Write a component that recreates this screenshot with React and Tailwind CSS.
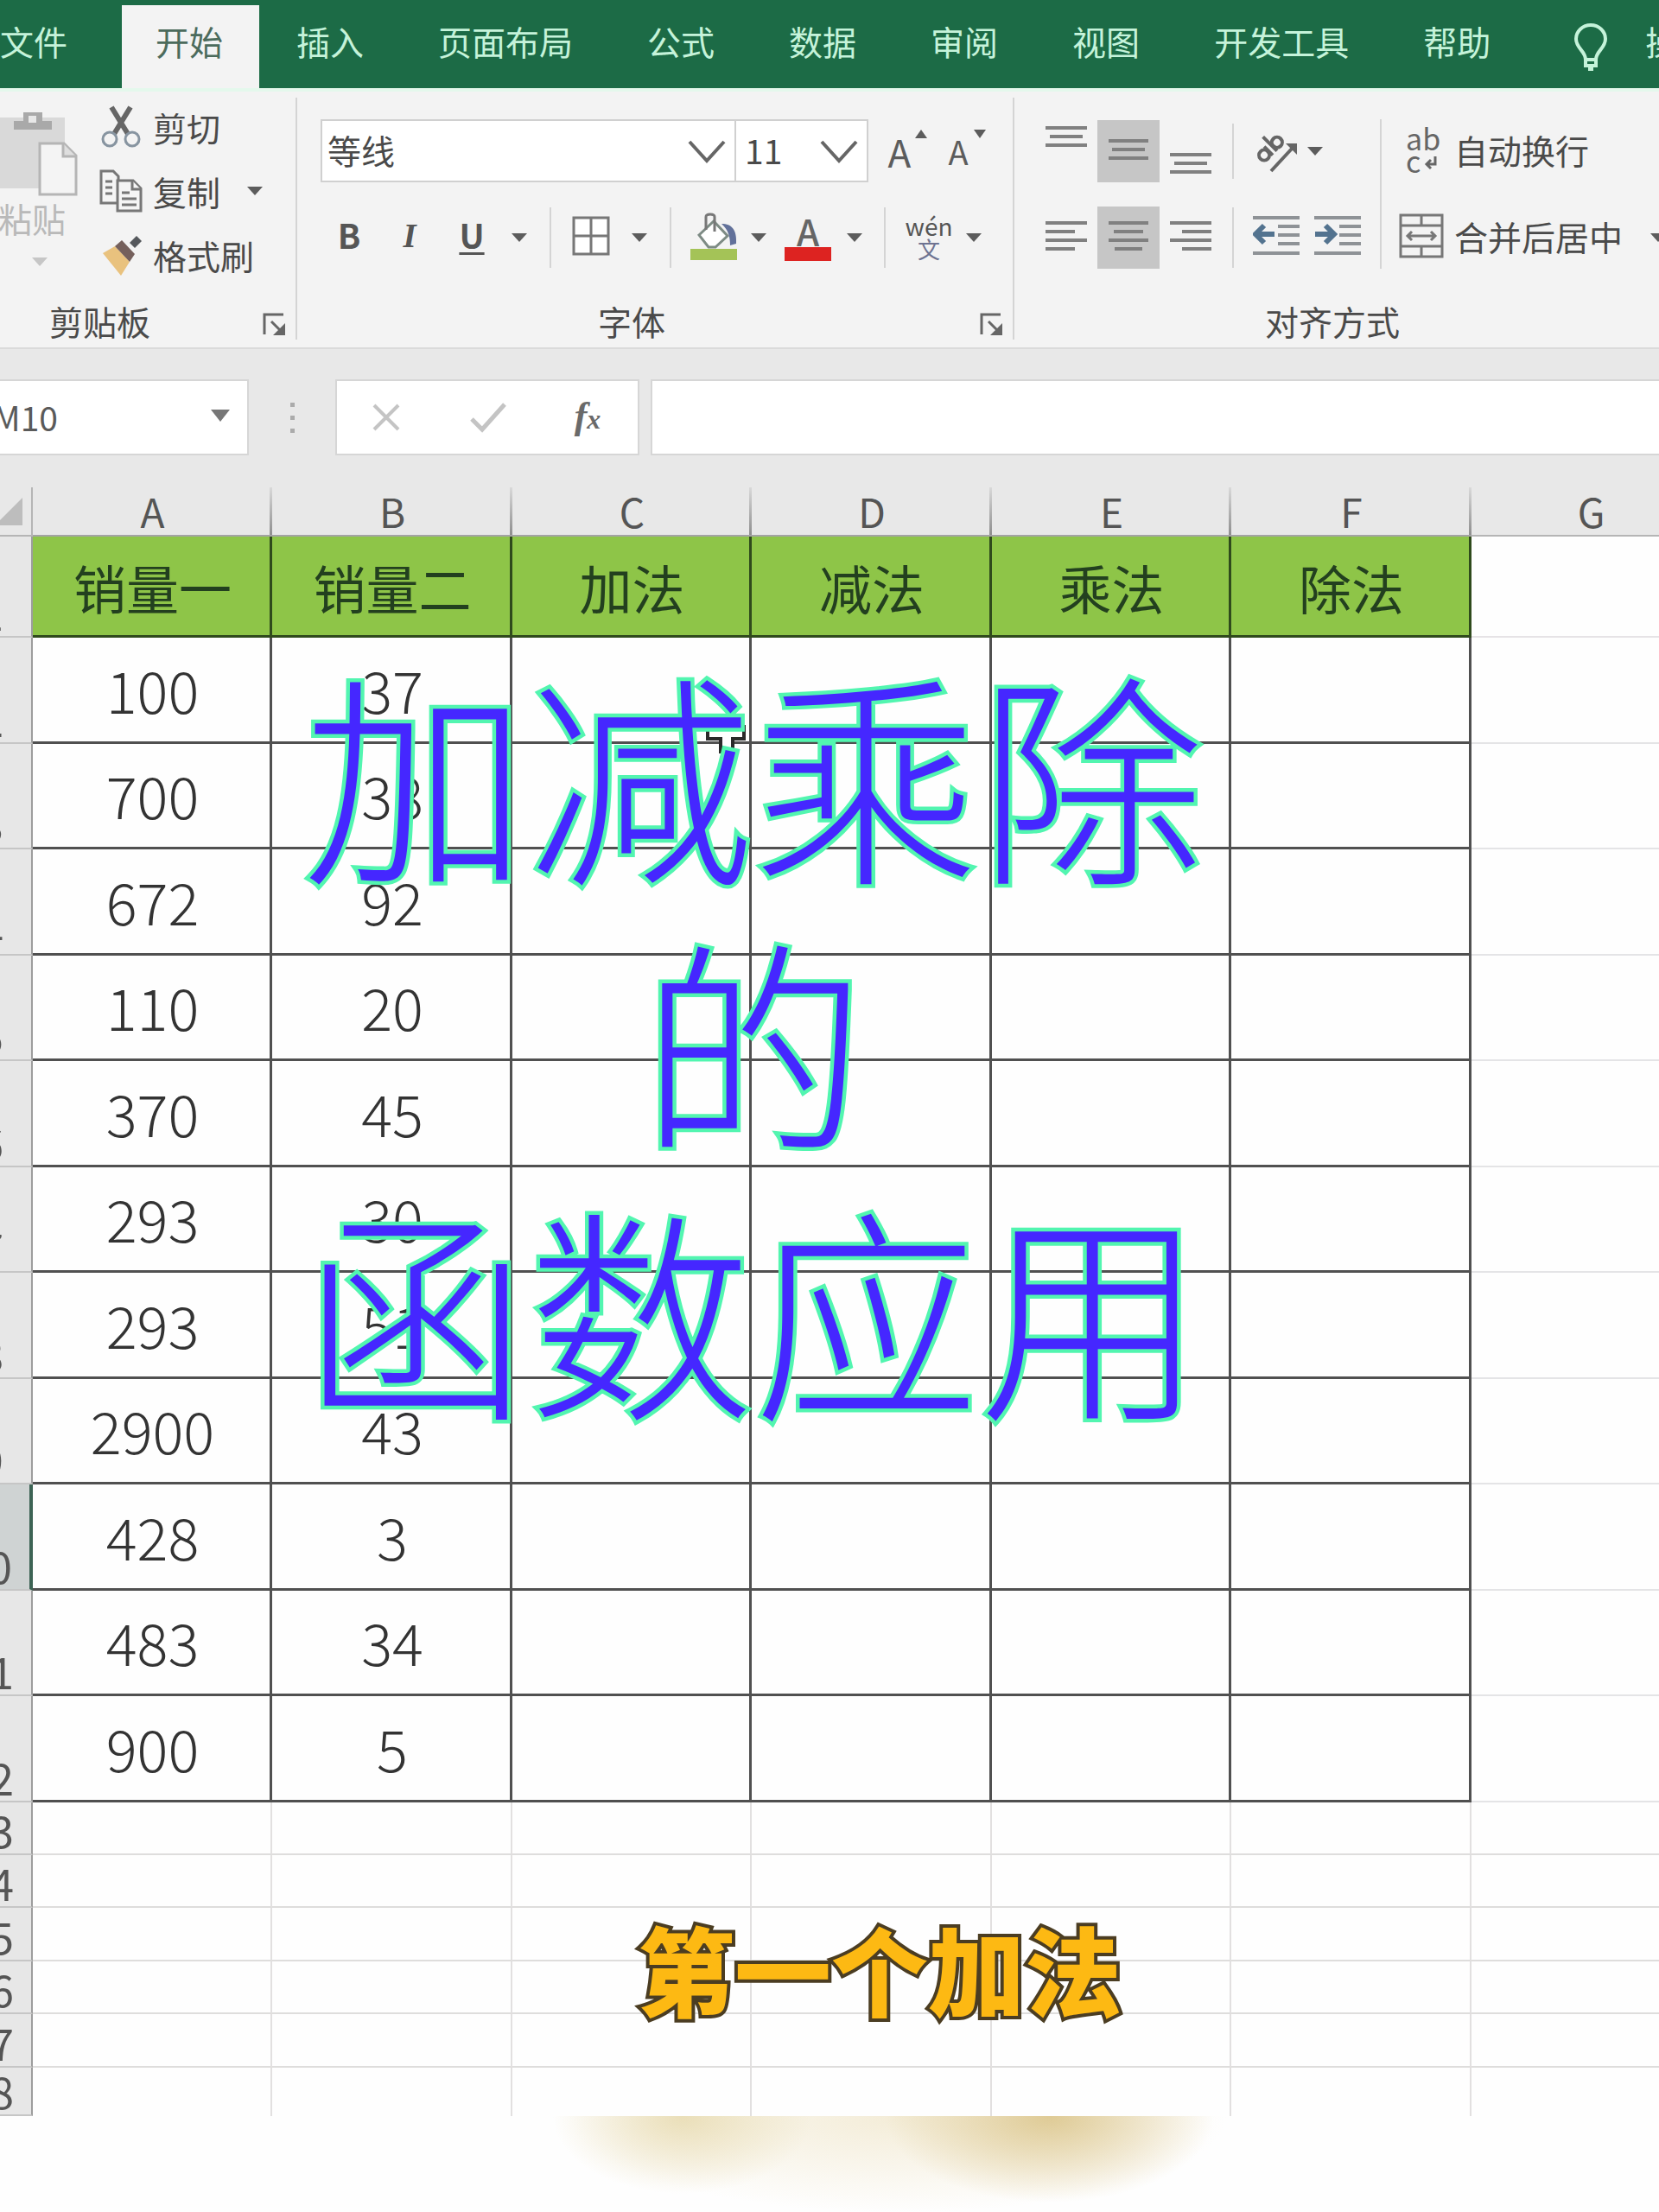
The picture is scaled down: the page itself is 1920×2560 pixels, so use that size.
import React from "react";

const tabs = ["插入", "页面布局", "公式", "数据", "审阅", "视图", "开发工具", "帮助"];

const columns = [
  { letter: "A", width: "w-[277px]", title: "销量一" },
  { letter: "B", width: "w-[278px]", title: "销量二" },
  { letter: "C", width: "w-[277px]", title: "加法" },
  { letter: "D", width: "w-[278px]", title: "减法" },
  { letter: "E", width: "w-[277px]", title: "乘法" },
  { letter: "F", width: "w-[278px]", title: "除法" },
];

const rows = [
  [100, 37],
  [700, 38],
  [672, 92],
  [110, 20],
  [370, 45],
  [293, 30],
  [293, 51],
  [2900, 43],
  [428, 3],
  [483, 34],
  [900, 5],
];

const emptyRows = [
  { n: 13, height: "h-[61px]" },
  { n: 14, height: "h-[61px]" },
  { n: 15, height: "h-[62px]" },
  { n: 16, height: "h-[61px]" },
  { n: 17, height: "h-[62px]" },
  { n: 18, height: "h-[56px]" },
];

function Caret({ className = "text-[#5c5c5c]" }) {
  return (
    <svg viewBox="0 0 18 10" className={`h-[10px] w-[18px] shrink-0 ${className}`} aria-hidden="true">
      <path d="M0 0H18L9 10Z" fill="currentColor" />
    </svg>
  );
}

function CaretButton({ label, className }) {
  return (
    <button type="button" aria-label={label} className={`flex h-full shrink-0 items-center justify-center ${className}`}>
      <Caret />
    </button>
  );
}

function Chevron() {
  return (
    <svg viewBox="0 0 44 28" className="pointer-events-none absolute right-[10px] h-7 w-11" fill="none" aria-hidden="true">
      <path d="M2 3L22 25L42 3" stroke="#666" strokeWidth="4" />
    </svg>
  );
}

function Launcher({ label }) {
  return (
    <button type="button" aria-label={label} className="absolute right-[10px] top-3">
      <svg viewBox="0 0 28 28" className="h-7 w-7" fill="none" stroke="#666" aria-hidden="true">
        <path d="M2 26V3H24" strokeWidth="3" />
        <path d="M10 11L22 23" strokeWidth="3" />
        <path d="M26 13V27H12Z" fill="#666" stroke="none" />
      </svg>
    </button>
  );
}

function Lines({ bars, offset = 0 }) {
  return (
    <svg viewBox="0 0 48 72" className="h-[72px] w-12" aria-hidden="true">
      {bars.map(([x, w], i) => (
        <rect key={i} x={x} y={offset + i * 10} width={w} height="4" fill="#808080" />
      ))}
    </svg>
  );
}

function AlignButton({ label, active, bars, offset }) {
  return (
    <button
      type="button"
      aria-label={label}
      aria-pressed={!!active}
      className={`flex h-[72px] w-[72px] shrink-0 items-center justify-center ${active ? "bg-[#c6c6c6]" : ""}`}
    >
      <Lines bars={bars} offset={offset} />
    </button>
  );
}

function Indent({ flip }) {
  return (
    <svg viewBox="0 0 54 48" className="h-12 w-[54px]" aria-hidden="true">
      <g fill="#8e9296">
        <rect x="0" y="1" width="54" height="4" />
        <rect x="29" y="11" width="25" height="4" />
        <rect x="29" y="21" width="25" height="4" />
        <rect x="29" y="31" width="25" height="4" />
        <rect x="0" y="42" width="54" height="4" />
      </g>
      <g stroke="#53738f" strokeWidth="6" fill="none" transform={flip ? "translate(26 0) scale(-1 1)" : undefined}>
        <path d="M3 22H25M13 12L3 22L13 32" />
      </g>
    </svg>
  );
}

function Divider({ className = "h-[70px]" }) {
  return <span className={`w-[2px] shrink-0 self-center bg-[#d4d4d4] ${className}`} />;
}

function TabBar() {
  return (
    <nav className="flex h-[102px] items-end overflow-hidden bg-[#1c6b46] text-[39px] leading-[44px] text-[#c5f3da]" aria-label="功能区">
      <button type="button" className="h-24 shrink-0 whitespace-nowrap pb-[14px] pr-[63px]">文件</button>
      <button type="button" className="h-24 shrink-0 whitespace-nowrap bg-[#f3f3f3] pb-[14px] pl-[39px] pr-[42px] text-[#4c6b5c]">开始</button>
      {tabs.map((t) => (
        <button key={t} type="button" className="h-24 shrink-0 whitespace-nowrap px-[43px] pb-[14px]">
          {t}
        </button>
      ))}
      <button type="button" className="flex h-24 shrink-0 items-center gap-11 whitespace-nowrap pb-[14px] pl-[54px]">
        <svg viewBox="0 0 38 56" className="mt-4 h-14 w-[38px]" fill="none" stroke="currentColor" strokeWidth="4" aria-hidden="true">
          <path d="M13 42C13 32 2 29 2 18A17 16 0 0 1 36 18C36 29 25 32 25 42Z" />
          <path d="M13 42V49H25V42M16 53H22" />
        </svg>
        操作说明搜索
      </button>
    </nav>
  );
}

function ClipboardGroup() {
  return (
    <section className="w-[342px] shrink-0" aria-label="剪贴板">
      <div className="flex h-[243px]">
        <button type="button" className="flex w-[92px] shrink-0 flex-col items-center pt-5 text-[39px] leading-[44px] text-[#b9b9b9]">
          <svg viewBox="0 0 92 104" className="h-[104px] w-[92px] shrink-0" aria-hidden="true">
            <rect x="0" y="10" width="75" height="82" fill="#d9d9d9" />
            <path d="M16 24V14H27V4H49V14H60V24Z" fill="#a9a9a9" />
            <rect x="33" y="8" width="9" height="8" fill="#e8e8e8" />
            <path d="M46 40H74L88 54V99H46Z" fill="#f4f4f4" stroke="#b5b5b5" strokeWidth="3" />
            <path d="M73 40V55H88" fill="#dedede" stroke="#b5b5b5" strokeWidth="3" />
          </svg>
          <span className="-ml-[18px] whitespace-nowrap">粘贴</span>
          <Caret className="mt-6 text-[#c6c6c6]" />
        </button>
        <div className="ml-[22px] flex flex-col pt-1 text-[39px] leading-[44px] text-[#4a4a4a]">
          <button type="button" className="flex h-[74px] shrink-0 items-center gap-[11px] whitespace-nowrap">
            <svg viewBox="0 0 52 52" className="h-[52px] w-[52px]" fill="none" stroke="#666" aria-hidden="true">
              <path d="M15 3L34 34M37 3L18 34" strokeWidth="6" />
              <circle cx="13" cy="40" r="8" strokeWidth="3" stroke="#8794a0" />
              <circle cx="39" cy="40" r="8" strokeWidth="3" stroke="#8794a0" />
            </svg>
            剪切
          </button>
          <div className="flex h-[74px] shrink-0 items-center">
            <button type="button" className="flex items-center gap-[11px] whitespace-nowrap">
              <svg viewBox="0 0 52 52" className="h-[52px] w-[52px]" fill="#f5f5f5" stroke="#777" strokeWidth="3" aria-hidden="true">
                <path d="M3 3H17L23 9V40H3Z" />
                <path d="M8 15H16M8 22H16M8 29H16" />
                <path d="M22 14H40L49 23V49H22Z" />
                <path d="M39 14V24H49M27 28H36M27 35H44M27 42H44" />
              </svg>
              复制
            </button>
            <CaretButton label="复制选项" className="ml-[31px] w-[18px]" />
          </div>
          <button type="button" className="flex h-[74px] shrink-0 items-center gap-[11px] whitespace-nowrap">
            <svg viewBox="0 0 52 52" className="h-[52px] w-[52px]" aria-hidden="true">
              <path d="M5 24L19 16L36 34L26 50Z" fill="#e9c27e" />
              <path d="M19 16L27 9L42 25L36 34Z" fill="#75605c" />
              <path d="M36 12L44 4L50 10L42 18Z" fill="#55585c" />
            </svg>
            格式刷
          </button>
        </div>
      </div>
      <div className="relative pl-[57px] text-[39px] leading-[44px] text-[#4a4a4a]">
        剪贴板
        <Launcher label="剪贴板选项" />
      </div>
    </section>
  );
}

function FontGroup() {
  return (
    <section className="w-[828px] shrink-0 pt-8" aria-label="字体">
      <div className="flex h-[73px] items-center pl-[27px] text-[#4a4a4a]">
        <label className="relative flex h-full w-[481px] items-center border-2 border-[#d0d0d0] bg-white">
          <select aria-label="字体名称" className="h-full w-full appearance-none pb-1 pl-[6px] text-[39px] leading-[44px] outline-none">
            <option>等线</option>
          </select>
          <Chevron />
        </label>
        <label className="relative flex h-full w-[153px] items-center border-2 border-l-0 border-[#d0d0d0] bg-white">
          <select aria-label="字号" className="h-full w-full appearance-none pb-1 pl-[10px] text-[39px] leading-[44px] outline-none">
            <option>11</option>
          </select>
          <Chevron />
        </label>
        <button type="button" aria-label="增大字号" className="relative ml-1 h-full w-[64px] text-[44px] leading-[66px] text-[#5c5c5c]">
          A
          <svg viewBox="0 0 14 10" className="absolute right-0 top-3 h-[10px] w-[14px]" aria-hidden="true">
            <path d="M7 0L14 10H0Z" fill="#5c5c5c" />
          </svg>
        </button>
        <button type="button" aria-label="减小字号" className="relative h-full w-[72px] text-[38px] leading-[70px] text-[#5c5c5c]">
          A
          <svg viewBox="0 0 14 10" className="absolute right-1 top-3 h-[10px] w-[14px]" aria-hidden="true">
            <path d="M0 0H14L7 10Z" fill="#5c5c5c" />
          </svg>
        </button>
      </div>
      <div className="mt-7 flex h-[72px] items-center pl-[27px] text-[39px] text-[#555]">
        <button type="button" aria-label="加粗" className="h-full w-[66px] shrink-0 pb-2 font-bold">B</button>
        <button type="button" aria-label="倾斜" className="h-full w-[74px] shrink-0 pb-1 font-['Liberation_Serif',serif] font-bold italic">I</button>
        <button type="button" aria-label="下划线" className="h-full w-[70px] shrink-0 pb-2 font-bold underline underline-offset-4">U</button>
        <CaretButton label="下划线选项" className="w-10" />
        <Divider className="ml-[15px] h-[70px]" />
        <button type="button" aria-label="边框" className="flex h-full w-[92px] shrink-0 items-center justify-center pb-1">
          <svg viewBox="0 0 44 46" className="h-[46px] w-11" fill="#fff" stroke="#777" strokeWidth="3" aria-hidden="true">
            <path d="M2 2H42V44H2ZM22 2V44M2 23H42" />
          </svg>
        </button>
        <CaretButton label="边框选项" className="w-5" />
        <Divider className="ml-[25px] h-[70px]" />
        <button type="button" aria-label="填充颜色" className="ml-2 flex h-full w-[82px] shrink-0 items-center justify-center">
          <svg viewBox="0 0 54 58" className="h-[58px] w-[54px]" aria-hidden="true">
            <rect x="0" y="42" width="54" height="13" fill="#a4c357" />
            <path d="M10 26L27 10L43 27L29 40H21Z" fill="#fff" stroke="#7d8b84" strokeWidth="3" />
            <path d="M18 20V5C18 1 28 1 28 5V22" fill="none" stroke="#777" strokeWidth="3" />
            <path d="M36 13C48 13 54 20 53 36L46 38C46 28 44 20 36 13Z" fill="#62719a" />
          </svg>
        </button>
        <CaretButton label="填充颜色选项" className="w-[22px]" />
        <button type="button" aria-label="字体颜色" className="flex h-full w-[92px] shrink-0 flex-col items-center justify-center">
          <span className="h-[38px] text-[42px] font-medium leading-[38px] text-[#666]">A</span>
          <span className="h-4 w-[54px] bg-[#dd2321]" />
        </button>
        <CaretButton label="字体颜色选项" className="w-4" />
        <Divider className="ml-[26px] h-[70px]" />
        <button type="button" aria-label="拼音指南" className="ml-1 flex h-full w-[92px] shrink-0 flex-col items-center justify-center">
          <span className="text-[28px] leading-[26px]">wén</span>
          <span className="text-[26px] leading-[28px] text-[#6e7391]">文</span>
        </button>
        <CaretButton label="拼音选项" className="w-3" />
      </div>
      <div className="relative mt-[38px] text-[39px] leading-[44px] text-[#4a4a4a]">
        <span className="block pl-[348px]">字体</span>
        <Launcher label="字体选项" />
      </div>
    </section>
  );
}

function AlignGroup() {
  return (
    <section className="shrink-0 pt-8" aria-label="对齐方式">
      <div className="flex">
        <div className="flex w-[423px] flex-col gap-7 pl-6">
          <div className="flex h-[73px] items-center">
            <AlignButton label="顶端对齐" offset={7} bars={[[0, 48], [5, 38], [0, 48]]} />
            <AlignButton label="垂直居中" active offset={22} bars={[[1, 46], [5, 38], [1, 46]]} />
            <AlignButton label="底端对齐" offset={38} bars={[[0, 48], [5, 38], [0, 48]]} />
            <Divider className="ml-3 h-[64px]" />
            <button type="button" aria-label="方向" className="ml-[22px]">
              <svg viewBox="0 0 52 52" className="h-[52px] w-[52px]" fill="none" stroke="#666" strokeWidth="4" aria-hidden="true">
                <g transform="rotate(-45 18 20)">
                  <circle cx="7" cy="24" r="6" />
                  <path d="M14 17V31" />
                  <path d="M21 8V31" />
                  <circle cx="28" cy="24" r="6" />
                </g>
                <path d="M21 49L46 22" />
                <path d="M38 17H51V30Z" fill="#666" stroke="none" />
              </svg>
            </button>
            <CaretButton label="方向选项" className="ml-[10px] w-5" />
          </div>
          <div className="flex h-[72px] items-center">
            <AlignButton label="左对齐" offset={17} bars={[[0, 48], [0, 34], [0, 48], [0, 34]]} />
            <AlignButton label="居中" active offset={17} bars={[[1, 46], [7, 34], [1, 46], [8, 32]]} />
            <AlignButton label="右对齐" offset={17} bars={[[0, 48], [14, 34], [0, 48], [14, 34]]} />
            <Divider className="ml-3 h-[70px]" />
            <button type="button" aria-label="减少缩进量" className="ml-[22px] pb-1">
              <Indent />
            </button>
            <button type="button" aria-label="增加缩进量" className="ml-[17px] pb-1">
              <Indent flip />
            </button>
          </div>
        </div>
        <Divider className="h-[173px]" />
        <div className="flex flex-col gap-7 pl-5 text-[39px] leading-[44px] text-[#4a4a4a]">
          <button type="button" className="flex h-[73px] items-center gap-3 whitespace-nowrap pb-1">
            <span className="flex w-[52px] flex-col pl-2 text-left text-[34px] leading-[26px] text-[#666]">
              <span>ab</span>
              <span className="flex items-end gap-1">
                c
                <svg viewBox="0 0 16 20" className="h-5 w-4" fill="none" stroke="#666" strokeWidth="3" aria-hidden="true">
                  <path d="M13 2V11H4M8 6L3 11L8 16" />
                </svg>
              </span>
            </span>
            自动换行
          </button>
          <div className="flex h-[72px] items-center">
            <button type="button" className="flex items-center gap-3 whitespace-nowrap pb-1">
              <svg viewBox="0 0 52 52" className="h-[52px] w-[52px]" fill="none" stroke="#777" strokeWidth="3" aria-hidden="true">
                <path d="M2 2H50V50H2ZM2 14H50M2 38H50M26 2V14M26 38V50" />
                <path d="M10 26H42M15 21L10 26L15 31M37 21L42 26L37 31" />
              </svg>
              合并后居中
            </button>
            <CaretButton label="合并选项" className="ml-8 w-[18px]" />
          </div>
        </div>
      </div>
      <div className="mt-[38px] w-[736px] text-center text-[39px] leading-[44px] text-[#4a4a4a]">对齐方式</div>
    </section>
  );
}

function FormulaBar() {
  return (
    <div className="flex h-[160px] items-center bg-[#e8e8e8] pb-[2px]">
      <div className="flex h-[88px] w-[288px] shrink-0 items-center overflow-hidden border-2 border-l-0 border-[#d6d6d6] bg-white">
        <input aria-label="名称框" defaultValue="M10" className="-ml-2 w-full min-w-0 flex-1 bg-transparent pb-[2px] text-[39px] text-[#5a5a5a] outline-none" />
        <button type="button" aria-label="名称列表" className="mr-5 flex items-center pb-1">
          <svg viewBox="0 0 22 14" className="h-[14px] w-[22px]" aria-hidden="true">
            <path d="M0 0H22L11 14Z" fill="#777" />
          </svg>
        </button>
      </div>
      <span className="flex w-[100px] shrink-0 flex-col items-center gap-[10px]">
        <i className="h-[5px] w-[5px] bg-[#ababab]" />
        <i className="h-[5px] w-[5px] bg-[#ababab]" />
        <i className="h-[5px] w-[5px] bg-[#ababab]" />
      </span>
      <div className="flex h-[88px] w-[352px] shrink-0 items-center border-2 border-[#d6d6d6] bg-white">
        <button type="button" aria-label="取消" className="flex w-[114px] justify-center">
          <svg viewBox="0 0 34 34" className="h-[34px] w-[34px]" stroke="#c4c4c4" strokeWidth="4" aria-hidden="true">
            <path d="M3 3L31 31M31 3L3 31" />
          </svg>
        </button>
        <button type="button" aria-label="输入" className="flex w-[122px] justify-center">
          <svg viewBox="0 0 42 36" className="h-9 w-[42px]" fill="none" stroke="#c4c4c4" strokeWidth="5" aria-hidden="true">
            <path d="M2 20L14 32L40 3" />
          </svg>
        </button>
        <button
          type="button"
          aria-label="插入函数"
          className="flex w-[108px] items-baseline justify-center font-['Liberation_Serif',serif] text-[44px] font-bold italic leading-[52px] text-[#6a6a6a]"
        >
          f<span className="text-[32px]">x</span>
        </button>
      </div>
      <input aria-label="编辑栏" className="ml-[13px] h-[88px] min-w-0 flex-1 border-2 border-r-0 border-[#d6d6d6] bg-white px-4 text-[39px] outline-none" />
    </div>
  );
}

function RowHead({ n }) {
  const selected = n === 10;
  return (
    <th
      scope="row"
      className={`border-b-2 border-b-[#c6c6c6] p-0 align-bottom font-normal ${
        selected ? "border-r-4 border-r-[#3c6354] bg-[#cfd3d3]" : "border-r-2 border-r-[#9d9d9d] bg-[#e7e7e7]"
      }`}
    >
      <div className={`flex justify-end pb-[3px] text-[50px] leading-[50px] text-[#555] ${n < 10 ? "pr-8" : "pr-5"}`}>{n}</div>
    </th>
  );
}

function Sheet() {
  return (
    <div className="overflow-hidden bg-[#fefefe]">
      <table className="w-[1980px] table-fixed border-separate border-spacing-0">
        <colgroup>
          <col className="w-[38px]" />
          {columns.map((c) => (
            <col key={c.letter} className={c.width} />
          ))}
          <col className="w-[277px]" />
        </colgroup>
        <thead>
          <tr className="h-[57px] bg-[#e8e8e8] text-[46px] leading-[50px] text-[#555]">
            <th className="border-b-2 border-r-2 border-[#b5b5b5] p-0">
              <svg viewBox="0 0 26 32" className="h-8 w-[26px]" aria-hidden="true">
                <path d="M26 0V32H0V26Z" fill="#bdbdbd" />
              </svg>
            </th>
            {columns.map((c) => (
              <th
                key={c.letter}
                scope="col"
                className="border-b-2 border-[#a3a3a3] bg-linear-to-b from-[#d9d9d9] to-[#8f8f8f] bg-[length:3px_100%] bg-right bg-no-repeat p-0 pb-[2px] font-normal"
              >
                {c.letter}
              </th>
            ))}
            <th scope="col" className="border-b-2 border-[#b5b5b5] p-0 pb-[2px] font-normal">G</th>
          </tr>
        </thead>
        <tbody>
          <tr className="h-[117px]">
            <RowHead n={1} />
            {columns.map((c) => (
              <td key={c.letter} className="border-b-[3px] border-r-[3px] border-[#2f4a1c] bg-[#8ec548] p-0 pl-[3px] pt-1 text-center text-[61px] leading-[70px] text-[#23401f]">
                {c.title}
              </td>
            ))}
            <td className="border-b-2 border-[#e6e3e6] p-0" />
          </tr>
          {rows.map((row, i) => (
            <tr key={i} className={i % 2 ? "h-[122px]" : "h-[123px]"}>
              <RowHead n={i + 2} />
              {columns.map((c, j) => (
                <td key={c.letter} className="border-b-[3px] border-r-[3px] border-[#505050] p-0 pb-[3px] pl-[3px] text-center text-[67px] font-light leading-[80px] text-[#333]">
                  {row[j]}
                </td>
              ))}
              <td className="border-b-2 border-[#e4e4e6] p-0" />
            </tr>
          ))}
          {emptyRows.map((r) => (
            <tr key={r.n} className={r.height}>
              <RowHead n={r.n} />
              {columns.map((c) => (
                <td key={c.letter} className={`border-r-2 border-r-[#e2e0e0] p-0 ${r.n === 18 ? "" : "border-b-2 border-b-[#dedddc]"}`} />
              ))}
              <td className={`p-0 ${r.n === 18 ? "" : "border-b-2 border-b-[#dedddc]"}`} />
            </tr>
          ))}
        </tbody>
      </table>
    </div>
  );
}

export default function App() {
  return (
    <main className="relative w-full overflow-hidden bg-[#fefefe] font-['Noto_Sans_CJK_SC',sans-serif]">
      <TabBar />
      <div className="flex overflow-hidden border-b-2 border-t-4 border-b-[#dadada] border-t-[#e4f8ec] bg-[#f3f3f3] pb-[9px]">
        <ClipboardGroup />
        <Divider className="mt-[7px] h-[280px] bg-[#c4c4c4]" />
        <FontGroup />
        <Divider className="mt-[7px] h-[280px] bg-[#c4c4c4]" />
        <AlignGroup />
      </div>
      <FormulaBar />
      <div className="relative">
        <Sheet />
        <svg viewBox="0 0 48 36" className="absolute left-[816px] top-[273px] h-9 w-12" aria-hidden="true">
          <path d="M3 4H45V18H32V33H18V18H3Z" fill="#fff" stroke="#2a2a2a" strokeWidth="4" />
        </svg>
        <h1 className="pointer-events-none absolute inset-x-0 top-[171px] pr-[176px] text-center text-[261px] font-light leading-[310px] text-[#4527ff] [-webkit-text-stroke:9px_#52f5b0] [paint-order:stroke_fill]">
          加减乘除
          <br />的<br />
          函数应用
        </h1>
        <p className="pointer-events-none absolute inset-x-0 bottom-[102px] pl-[116px] text-center text-[112px] font-black leading-[140px] text-[#fdb913] [-webkit-text-stroke:8px_#4b3d22] [paint-order:stroke_fill]">
          第一个加法
        </p>
      </div>
      <div className="h-28 bg-[radial-gradient(ellipse_190px_100px_at_1215px_0px,#d8c080cc,transparent),radial-gradient(ellipse_150px_90px_at_790px_0px,#e6d8aacc,transparent),radial-gradient(ellipse_380px_112px_at_1040px_0px,#f1e8cecc,transparent)]" />
    </main>
  );
}
